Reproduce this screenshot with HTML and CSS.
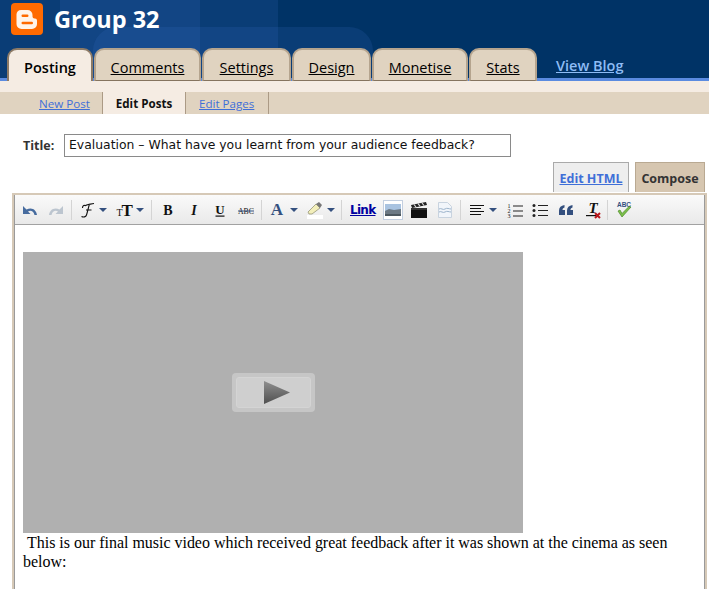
FILE: index.html
```html
<!DOCTYPE html>
<html lang="en">
<head>
<meta charset="utf-8">
<title>Group 32</title>
<link rel="stylesheet" href="styles.css">
</head>
<body>
<header class="masthead">
  <div class="deco deco-left"></div>
  <div class="deco deco-a"></div>
  <div class="deco deco-b"></div>
  <div class="deco deco-c"></div>
  <div class="brand">
    <svg class="logo" viewBox="0 0 32 32" width="32" height="32">
      <rect width="32" height="32" rx="4" fill="#ff6a00"/>
      <path d="M10 7h6.500a5 5 0 0 1 5 5v1.500a2 2 0 0 0 2 2h.5a2 2 0 0 1 2 2V21a5 5 0 0 1-5 5H10.500a5 5 0 0 1-5-5V11.500A4.500 4.500 0 0 1 10 7z" fill="#fff4ea"/>
      <rect x="10.500" y="11.500" width="7" height="2.400" rx="1.200" fill="#ff6a00"/>
      <rect x="10.500" y="18.800" width="11.500" height="2.400" rx="1.200" fill="#ff6a00"/>
    </svg>
    <h1 class="blog-name">Group 32</h1>
  </div>
  <nav class="tabs">
    <a class="tab tab-active">Posting</a>
    <a class="tab tab-comments">Comments</a>
    <a class="tab tab-settings">Settings</a>
    <a class="tab tab-design">Design</a>
    <a class="tab tab-monetise">Monetise</a>
    <a class="tab tab-stats">Stats</a>
    <a class="view-blog">View Blog</a>
  </nav>
</header>
<div class="strip"></div>
<nav class="subnav">
  <a class="sub sub-new">New Post</a>
  <a class="sub sub-active">Edit Posts</a>
  <a class="sub sub-pages">Edit Pages</a>
</nav>
<main>
  <div class="title-row">
    <span class="title-label">Title:</span>
    <div class="title-input">Evaluation – What have you learnt from your audience feedback?</div>
  </div>
  <div class="mode-row">
    <a class="mode mode-html">Edit HTML</a>
    <span class="mode mode-compose">Compose</span>
  </div>
  <section class="editor">
    <div class="toolbar">
      <svg class="ic" viewBox="0 0 20 20"><path d="M3 5v8h7.500L8 10.500c2.500-1.500 5.500-.5 6.500 3.500h2.500c-.5-5-5-8.500-10.500-5.500z" fill="#476c9f" transform="translate(0 1)"/></svg>
      <svg class="ic g6" viewBox="0 0 20 20"><path d="M17 5v8H9.500L12 10.500c-2.500-1.500-5.500-.5-6.500 3.500H3c.5-5 5-8.500 10.500-5.500z" fill="#bcc5cf" transform="translate(0 1)"/></svg>
      <span class="sep g5"></span>
      <svg class="ic g5" viewBox="0 0 20 20"><path d="M8 6c1-1.500 4-1.500 9-2.500M12.500 4c-1 3-2 8-3 11-.7 2-3 2.500-5 1.500M9 10h5.500M5.500 8c0-2 1-3 2.500-2.500" fill="none" stroke="#111" stroke-width="1.100"/></svg>
      <svg class="caret g2" viewBox="0 0 8 20"><path d="M0 8h8l-4 4z" fill="#34507f"/></svg>
      <svg class="ic g8" viewBox="0 0 20 20"><text class="glyph" x="1.500" y="16" font-size="10">T</text><text class="glyph" x="6.500" y="15.500" font-size="17" font-weight="700">T</text></svg>
      <svg class="caret g1" viewBox="0 0 8 20"><path d="M0 8h8l-4 4z" fill="#34507f"/></svg>
      <span class="sep g7"></span>
      <svg class="ic g6" viewBox="0 0 20 20"><text class="glyph" x="10" y="15" font-size="14" font-weight="700" text-anchor="middle">B</text></svg>
      <svg class="ic g6" viewBox="0 0 20 20"><text class="glyph" x="10" y="15" font-size="14" font-weight="700" font-style="italic" text-anchor="middle">I</text></svg>
      <svg class="ic g6" viewBox="0 0 20 20"><text class="glyph" x="10" y="14" font-size="13" font-weight="700" text-anchor="middle">U</text><rect x="5.500" y="15.500" width="9" height="1.200" fill="#111"/></svg>
      <svg class="ic g6" viewBox="0 0 20 20"><text class="glyph" x="10" y="14" font-size="9" text-anchor="middle" textLength="16" lengthAdjust="spacingAndGlyphs">ABC</text><rect x="2" y="10.500" width="16" height="1" fill="#34507f"/></svg>
      <span class="sep g5"></span>
      <svg class="ic g5" viewBox="0 0 20 20"><text class="glyph glyph-blue" x="10" y="15" font-size="17" font-weight="700" text-anchor="middle">A</text></svg>
      <svg class="caret g3" viewBox="0 0 8 20"><path d="M0 8h8l-4 4z" fill="#34507f"/></svg>
      <svg class="ic g7" viewBox="0 0 20 20"><rect x="2" y="15" width="16" height="4" fill="#fff"/><path d="M3 12l8-8 4 4-8 6H4z" fill="#f3efbb" stroke="#8a8a6a" stroke-width=".7"/><path d="M11 4l3-2 3 3-2 3z" fill="#777"/></svg>
      <svg class="caret g2" viewBox="0 0 8 20"><path d="M0 8h8l-4 4z" fill="#34507f"/></svg>
      <span class="sep g6"></span>
      <a class="tool-link">Link</a>
      <span class="image-btn"><svg viewBox="0 0 16 12" width="16" height="12"><rect width="16" height="12" fill="#a9c3e0"/><path d="M0 7l4-2 5 1 7-1v7H0z" fill="#6d7a85"/><rect y="10" width="16" height="2" fill="#4c5860"/></svg></span>
      <svg class="ic g6" viewBox="0 0 20 20"><path d="M2 8h16v10H2z" fill="#111"/><path d="M2 5l15-3 1 3L3 8z" fill="#222"/><path d="M5 4.500l2 2.500M9 3.700l2 2.500M13 3l2 2.500" stroke="#ddd" stroke-width="1.200"/><path d="M2 9h16" stroke="#555"/></svg>
      <svg class="ic g6" viewBox="0 0 20 20"><path d="M3.500 2.500h9l4 4v11h-13z" fill="#f1f5fa" stroke="#c8d3df"/><path d="M4 9c2-1.500 4 1.500 6 0s4 0 6 0M4 12c2-1.500 4 1.500 6 0s4 0 6 0" fill="none" stroke="#9db4cc"/></svg>
      <span class="sep g5"></span>
      <svg class="ic g6" viewBox="0 0 20 20"><path d="M3 5.500h14M3 8.500h11M3 11.500h14M3 14.500h11" stroke="#111" stroke-width="1.200"/></svg>
      <svg class="caret g2" viewBox="0 0 8 20"><path d="M0 8h8l-4 4z" fill="#34507f"/></svg>
      <svg class="ic g8" viewBox="0 0 20 20"><text class="glyph" x="2.500" y="8" font-size="6">1</text><text class="glyph" x="2.500" y="13" font-size="6">2</text><text class="glyph" x="2.500" y="18" font-size="6">3</text><path d="M8 6h10M8 11h10M8 16h10" stroke="#222" stroke-width="1.200"/></svg>
      <svg class="ic g5" viewBox="0 0 20 20"><circle cx="4" cy="5.500" r="1.500" fill="#222"/><circle cx="4" cy="10.500" r="1.500" fill="#222"/><circle cx="4" cy="15.500" r="1.500" fill="#222"/><path d="M8 5.500h10M8 10.500h10M8 15.500h10" stroke="#222" stroke-width="1.200"/></svg>
      <svg class="ic g6" viewBox="0 0 20 20"><path d="M3 15V10.500C3 7.500 5 5.500 8.500 5v2.500C7 8 6.500 9 6.500 10H9v5zM11 15v-4.500C11 7.500 13 5.500 16.500 5v2.500C15 8 14.500 9 14.500 10H17v5z" fill="#34507f"/></svg>
      <svg class="ic g7" viewBox="0 0 20 20"><text class="glyph" x="10" y="13" font-size="15" font-weight="700" font-style="italic" text-anchor="middle">T</text><rect x="3" y="15" width="10" height="1.200" fill="#111"/><path d="M12 13l5 5M17 13l-5 5" stroke="#b8161c" stroke-width="2"/></svg>
      <span class="sep g4"></span>
      <svg class="ic g6" viewBox="0 0 20 20"><text class="spell" x="10" y="7" text-anchor="middle">ABC</text><path d="M4 11l4 6 9-10-2-.5L8 13.500 6 10z" fill="#7cc04a" stroke="#4d8a2a" stroke-width=".7"/></svg>
    </div>
    <div class="canvas">
      <div class="video">
        <div class="play">
          <div class="play-inner">
            <svg viewBox="0 0 26 23" width="26" height="23">
              <defs><linearGradient id="pg" x1="0" y1="0" x2="0" y2="1"><stop offset="0" stop-color="#8f8f8f"/><stop offset="1" stop-color="#4f4f4f"/></linearGradient></defs>
              <path d="M0 0l26 11.500L0 23z" fill="url(#pg)"/>
            </svg>
          </div>
        </div>
      </div>
      <p class="body-text">&nbsp;This is our final music video which received great feedback after it was shown at the cinema as seen below:</p>
    </div>
  </section>
</main>
</body>
</html>
```

FILE: styles.css
```css
html, body {
  margin: 0;
  height: 589px;
  overflow: hidden;
  background: #fff;
}

body {
  font-family: "Open Sans", Verdana, sans-serif;
  color: #111;
}

.masthead {
  position: relative;
  height: 81px;
  background: #003366;
  overflow: hidden;
  display: flex;
  flex-direction: column;
}

.deco {
  position: absolute;
  background: rgba(60, 115, 200, 0.17);
}

.deco-left { left: -40px; top: -20px; width: 100px; height: 120px; }
.deco-a { left: 60px; top: -30px; width: 140px; height: 130px; border-radius: 0 24px 0 0; }
.deco-b { left: 60px; top: -30px; width: 218px; height: 130px; border-radius: 0 24px 0 0; }
.deco-c { left: 93px; top: 27px; width: 280px; height: 70px; border-radius: 24px 24px 0 0; }

.brand {
  position: relative;
  display: flex;
  align-items: center;
  gap: 11px;
  padding: 3px 0 0 11px;
  height: 32px;
  flex: none;
}

.logo { display: block; }

.blog-name {
  margin: 0;
  font-size: 23.500px;
  line-height: 32px;
  font-weight: 700;
  color: #fff;
}

.tabs {
  position: relative;
  display: flex;
  align-items: flex-start;
  gap: 1px;
  margin-top: 13px;
  padding-left: 7px;
  height: 33px;
  box-sizing: border-box;
  border-bottom: 3px solid #5b8be0;
  flex: none;
}

.tab {
  box-sizing: border-box;
  height: 33px;
  flex: none;
  display: flex;
  justify-content: center;
  padding-top: 9px;
  font-size: 14.500px;
  line-height: 18px;
  color: #000;
  text-decoration: underline;
  background: #e0d3c0;
  border: 2px solid #b5a48e;
  border-bottom: 1px solid #85745f;
  border-radius: 10px 10px 0 0;
}

.tab-active {
  width: 86px;
  background: #f5ece3;
  border-color: #8c7a66;
  border-bottom: 0;
  font-weight: 600;
  text-decoration: none;
}

.tab-comments { width: 107px; }
.tab-settings { width: 89px; }
.tab-design { width: 79px; }
.tab-monetise { width: 96px; }
.tab-stats { width: 68px; }

.view-blog {
  margin: 9px 0 0 18px;
  font-size: 14.500px;
  line-height: 18px;
  font-weight: 600;
  color: #8ebcf5;
  text-decoration: underline;
}

.strip {
  height: 11px;
  background: #f5ece3;
}

.subnav {
  display: flex;
  height: 22px;
  background: #e0d3c0;
  font-size: 11.600px;
  line-height: 23px;
}

.sub {
  box-sizing: border-box;
  height: 22px;
  flex: none;
  color: #3f6fd8;
  text-decoration: underline;
}

.sub-new { width: 102px; padding-left: 39px; }

.sub-active {
  width: 84px;
  text-align: center;
  color: #111;
  font-weight: 700;
  text-decoration: none;
  background: #f5ece3;
  border-left: 1px solid #ab9a85;
  border-right: 1px solid #ab9a85;
}

.sub-pages {
  width: 83px;
  padding-left: 13px;
  border-right: 1px solid #ab9a85;
}

.title-row {
  display: flex;
  align-items: center;
  gap: 7px;
  margin-top: 20px;
  padding-left: 23px;
}

.title-label {
  width: 34px;
  font-size: 12.500px;
  font-weight: 700;
  color: #333;
}

.title-input {
  box-sizing: border-box;
  width: 447px;
  height: 23px;
  padding-left: 4px;
  border: 1px solid #8a8a8a;
  font-family: "DejaVu Sans", Verdana, sans-serif;
  font-size: 12.400px;
  line-height: 20px;
  color: #111;
  white-space: nowrap;
}

.mode-row {
  display: flex;
  justify-content: flex-end;
  gap: 6px;
  margin-top: 5px;
  padding-right: 4px;
}

.mode {
  box-sizing: border-box;
  height: 31px;
  font-size: 12.500px;
  line-height: 31px;
  font-weight: 700;
  text-align: center;
  border: 1px solid #aaa;
  border-bottom: 0;
}

.mode-html {
  width: 76px;
  background: #eeeeee;
  color: #3f6fd8;
  text-decoration: underline;
}

.mode-compose {
  width: 70px;
  background: #d6c6b0;
  border-color: #b9a992;
  color: #333;
}

.editor {
  box-sizing: border-box;
  height: 420px;
  margin: -1px 1px 0 11px;
  border: 3px solid #d6c9b7;
  outline: 1px solid #fff;
  outline-offset: -1px;
  box-shadow: inset 0 0 0 1px #9a9a9a;
  padding: 1px;
  background: #fff;
}

.toolbar {
  box-sizing: border-box;
  display: flex;
  align-items: center;
  height: 30px;
  margin-top: -1px;
  padding-left: 5px;
  background: linear-gradient(#fafafa, #e9e9e9);
  border-bottom: 1px solid #a2a2a2;
}

.ic {
  display: block;
  width: 20px;
  height: 20px;
  flex: none;
}

.caret {
  display: block;
  width: 8px;
  height: 20px;
  flex: none;
}

.sep {
  display: block;
  width: 1px;
  height: 20px;
  background: #d4d4d4;
  flex: none;
}

.g1 { margin-left: 1px; }
.g2 { margin-left: 2px; }
.g3 { margin-left: 3px; }
.g4 { margin-left: 4px; }
.g5 { margin-left: 5px; }
.g6 { margin-left: 6px; }
.g7 { margin-left: 7px; }
.g8 { margin-left: 8px; }

.glyph {
  font-family: "Liberation Serif", serif;
  fill: #111;
}

.glyph-blue { fill: #34507f; }

.spell {
  font-family: "Liberation Sans", sans-serif;
  font-size: 6.500px;
  font-weight: 700;
  fill: #34507f;
}

.tool-link {
  margin-left: 8px;
  width: 25px;
  flex: none;
  font-size: 12px;
  font-weight: 700;
  color: #0000a0;
  text-decoration: underline;
  font-family: "DejaVu Sans", sans-serif;
  letter-spacing: -0.7px;
}

.image-btn {
  box-sizing: border-box;
  display: flex;
  align-items: center;
  justify-content: center;
  width: 20px;
  height: 20px;
  margin-left: 8px;
  flex: none;
  background: #fff;
  border: 1px solid #c3cfe0;
}

.canvas {
  padding: 27px 0 0 8px;
}

.video {
  display: flex;
  align-items: center;
  justify-content: center;
  width: 500px;
  height: 281px;
  background: #b0b0b0;
}

.play {
  box-sizing: border-box;
  width: 83px;
  height: 39px;
  padding: 4px;
  border-radius: 4px;
  background: #c6c6c6;
}

.play-inner {
  box-sizing: border-box;
  display: flex;
  align-items: center;
  justify-content: center;
  height: 100%;
  padding-left: 8px;
  border-radius: 3px;
  background: #cfcfcf;
  border: 1px solid #d4d4d4;
}

.body-text {
  margin: 0;
  font-family: "Liberation Serif", "Times New Roman", serif;
  font-size: 16px;
  line-height: 19px;
  letter-spacing: -0.02px;
  color: #000;
}
```
